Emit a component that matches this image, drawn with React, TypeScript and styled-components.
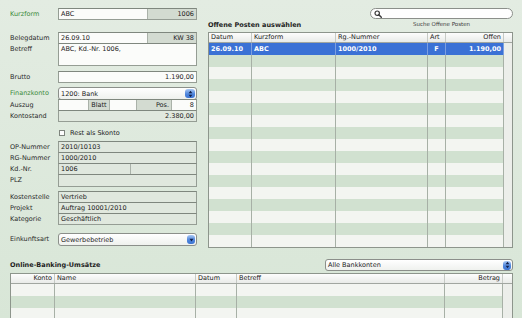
import React from 'react'
import styled, { createGlobalStyle } from 'styled-components'

const GlobalStyle = createGlobalStyle`
  html, body { margin: 0; padding: 0; }
  body {
    font-family: 'DejaVu Sans', 'Liberation Sans', sans-serif;
    font-size: 6.5px;
    color: #222;
  }
`

type Tone = 'white' | 'gray' | 'ro'
type Align = 'left' | 'center' | 'right'

const tones: Record<Tone, string> = {
  white: '#fbfcfa',
  gray: '#d3dbd1',
  ro: '#e0e8de',
}

const justify: Record<Align, string> = {
  left: 'flex-start',
  center: 'center',
  right: 'flex-end',
}

const Window = styled.div`
  width: 522px;
  height: 318px;
  overflow: hidden;
  background: linear-gradient(#e3ece2, #d8e6d7);
  display: flex;
  flex-direction: column;
`

const Top = styled.div`
  display: flex;
  align-items: flex-start;
`

const Form = styled.div`
  width: 187px;
  padding: 8px 0 0 10px;
  display: flex;
  flex-direction: column;
`

const Row = styled.div<{ $mt?: number; $h: number }>`
  display: flex;
  height: ${p => p.$h}px;
  margin-top: ${p => p.$mt ?? 0}px;
`

const Label = styled.div<{ $accent?: boolean }>`
  flex: 0 0 48px;
  line-height: 12px;
  color: ${p => (p.$accent ? '#3b8a3a' : '#2a2a2a')};
  white-space: nowrap;
`

const Field = styled.div<{ $tone?: Tone }>`
  flex: 1;
  display: flex;
  box-sizing: border-box;
  border: 1px solid #959d94;
  border-top-color: #7f877e;
  background: ${p => tones[p.$tone ?? 'white']};
`

const Seg = styled.div<{ $w?: number; $tone?: Tone; $align?: Align; $top?: boolean }>`
  flex: ${p => (p.$w ? `0 0 ${p.$w}px` : '1')};
  display: flex;
  align-items: ${p => (p.$top ? 'flex-start' : 'center')};
  justify-content: ${p => justify[p.$align ?? 'left']};
  padding: ${p => (p.$top ? '1px 2px 0' : '0 2px')};
  box-sizing: border-box;
  background: ${p => (p.$tone ? tones[p.$tone] : 'transparent')};
  white-space: nowrap;
  overflow: hidden;

  & + & {
    border-left: 1px solid #aab2a9;
  }
`

const Select = styled.div`
  flex: 1;
  display: flex;
  align-items: center;
  justify-content: space-between;
  box-sizing: border-box;
  border: 1px solid #8b8f8a;
  border-radius: 3px;
  padding: 0 1px 0 2px;
  background: linear-gradient(#ffffff, #eff1ee);
  white-space: nowrap;
`

const Stepper = styled.div<{ $w: number }>`
  flex: 0 0 ${p => p.$w}px;
  height: 9px;
  border-radius: 3px;
  background: linear-gradient(#a9c8f3, #4f86dd 55%, #3d75d2);
  display: flex;
  align-items: center;
  justify-content: center;
`

const CheckRow = styled.label`
  display: flex;
  align-items: center;
  gap: 5px;
  padding-left: 49px;
  line-height: 10px;
`

const Box = styled.span`
  width: 6px;
  height: 6px;
  box-sizing: border-box;
  border: 1px solid #7e847d;
  background: #fdfdfd;
`

const Right = styled.div`
  margin-left: 11px;
  width: 305px;
  padding-top: 8px;
  display: flex;
  flex-direction: column;
`

const PanelHead = styled.div`
  height: 24px;
  display: flex;
  justify-content: space-between;
`

const Title = styled.div<{ $centered?: boolean }>`
  align-self: ${p => (p.$centered ? 'center' : 'flex-end')};
  margin-bottom: ${p => (p.$centered ? 0 : 2)}px;
  line-height: 10px;
  font-weight: bold;
  color: #1e1e1e;
`

const SearchGroup = styled.div`
  width: 143px;
  display: flex;
  flex-direction: column;
  align-items: center;
`

const SearchField = styled.div`
  align-self: stretch;
  height: 11px;
  box-sizing: border-box;
  border: 1px solid #8b8f8a;
  border-radius: 6px;
  background: #fefefe;
  display: flex;
  align-items: center;
  padding-left: 3px;
`

const Caption = styled.div`
  margin-top: 1px;
  font-size: 5.5px;
  line-height: 8px;
  color: #3a3a3a;
`

const Frame = styled.div<{ $h?: number }>`
  box-sizing: border-box;
  border: 1px solid #8d958c;
  background: #eceeea;
  ${p => (p.$h ? `height: ${p.$h}px;` : '')}
  overflow: hidden;
`

const HeadRow = styled.div<{ $cols: string }>`
  display: grid;
  grid-template-columns: ${p => p.$cols};
  height: 10px;
  box-sizing: border-box;
  border-bottom: 1px solid #a1a6a0;
  background: linear-gradient(#fdfdfd, #e9ebe8);
`

const HeadCell = styled.div<{ $align?: Align }>`
  border-right: 1px solid #c6cac5;
  padding: 0 2px;
  line-height: 9px;
  text-align: ${p => p.$align ?? 'left'};
  white-space: nowrap;
  overflow: hidden;

  &:last-child {
    border-right: none;
  }
`

const BodyRow = styled.div<{ $cols: string; $odd: boolean; $sel?: boolean }>`
  display: grid;
  grid-template-columns: ${p => p.$cols};
  height: 12px;
  background: ${p => (p.$sel ? '#3b71d5' : p.$odd ? '#d1e1d0' : '#f3f5f1')};
  color: ${p => (p.$sel ? '#fff' : '#222')};
  font-weight: ${p => (p.$sel ? 'bold' : 'normal')};
`

const Cell = styled.div<{ $align?: Align; $sel?: boolean }>`
  border-right: 1px solid ${p => (p.$sel ? '#7c9fe0' : '#a7b0a6')};
  padding: 0 2px;
  line-height: 12px;
  text-align: ${p => p.$align ?? 'left'};
  white-space: nowrap;
  overflow: hidden;
`

const Track = styled.div`
  background: #eceeea;
`

const Bottom = styled.div`
  margin-top: 11px;
  padding: 0 9px 0 10px;
  display: flex;
  flex-direction: column;
`

const BottomHead = styled.div`
  height: 12px;
  display: flex;
  justify-content: space-between;
  align-items: center;
  margin-bottom: 2px;
`

const BottomSelect = styled(Select)`
  flex: 0 0 188px;
  height: 12px;
`

const SearchIcon = () => (
  <svg width="8" height="8" viewBox="0 0 8 8">
    <circle cx="3.2" cy="3.2" r="2.2" fill="none" stroke="#3a3a3a" strokeWidth="1.2" />
    <line x1="4.8" y1="4.8" x2="7.3" y2="7.3" stroke="#3a3a3a" strokeWidth="1.5" strokeLinecap="round" />
  </svg>
)

const Arrows = ({ single }: { single?: boolean }) =>
  single ? (
    <svg width="5" height="4" viewBox="0 0 5 4">
      <path d="M0.5 0.8 L4.5 0.8 L2.5 3.4 Z" fill="#12204a" />
    </svg>
  ) : (
    <svg width="5" height="8" viewBox="0 0 5 8">
      <path d="M0.6 3.2 L4.4 3.2 L2.5 0.8 Z" fill="#12204a" />
      <path d="M0.6 4.8 L4.4 4.8 L2.5 7.2 Z" fill="#12204a" />
    </svg>
  )

const opCols = '43px 84px 92px 18px 58px 1fr'
const bankCols = '44px 141px 41px 208px 58px 1fr'

const openItems = Array.from({ length: 17 }, (_, i) =>
  i === 0 ? ['26.09.10', 'ABC', '1000/2010', 'F', '1.190,00'] : ['', '', '', '', '']
)

const opAlign: Align[] = ['left', 'left', 'left', 'center', 'right']
const bankAlign: Align[] = ['right', 'left', 'left', 'left', 'right']

export default function App() {
  return (
    <>
      <GlobalStyle />
      <Window>
        <Top>
          <Form>
            <Row $h={12}>
              <Label $accent>Kurzform</Label>
              <Field>
                <Seg>ABC</Seg>
                <Seg $w={49} $tone="gray" $align="right">1006</Seg>
              </Field>
            </Row>
            <Row $mt={12} $h={12}>
              <Label>Belegdatum</Label>
              <Field>
                <Seg>26.09.10</Seg>
                <Seg $w={49} $tone="gray" $align="right">KW 38</Seg>
              </Field>
            </Row>
            <Row $mt={-1} $h={23}>
              <Label>Betreff</Label>
              <Field>
                <Seg $top>ABC, Kd.-Nr. 1006,</Seg>
              </Field>
            </Row>
            <Row $mt={5} $h={12}>
              <Label>Brutto</Label>
              <Field>
                <Seg $align="right">1.190,00</Seg>
              </Field>
            </Row>
            <Row $mt={4} $h={13}>
              <Label $accent>Finanzkonto</Label>
              <Select>
                1200: Bank
                <Stepper $w={10}>
                  <Arrows />
                </Stepper>
              </Select>
            </Row>
            <Row $mt={-1} $h={12}>
              <Label>Auszug</Label>
              <Field>
                <Seg $w={29} />
                <Seg $w={21} $tone="gray" $align="center">Blatt</Seg>
                <Seg $w={27} />
                <Seg $w={35} $tone="gray" $align="right">Pos.</Seg>
                <Seg $align="right">8</Seg>
              </Field>
            </Row>
            <Row $mt={-1} $h={12}>
              <Label>Kontostand</Label>
              <Field $tone="ro">
                <Seg $align="right">2.380,00</Seg>
              </Field>
            </Row>
            <Row $mt={6} $h={10}>
              <CheckRow>
                <Box />
                Rest als Skonto
              </CheckRow>
            </Row>
            <Row $mt={3} $h={12}>
              <Label>OP-Nummer</Label>
              <Field $tone="ro">
                <Seg>2010/10103</Seg>
              </Field>
            </Row>
            <Row $mt={-1} $h={12}>
              <Label>RG-Nummer</Label>
              <Field $tone="ro">
                <Seg>1000/2010</Seg>
              </Field>
            </Row>
            <Row $mt={-1} $h={12}>
              <Label>Kd.-Nr.</Label>
              <Field $tone="ro">
                <Seg $w={71}>1006</Seg>
                <Seg />
              </Field>
            </Row>
            <Row $mt={-1} $h={13}>
              <Label>PLZ</Label>
              <Field $tone="ro" />
            </Row>
            <Row $mt={4} $h={12}>
              <Label>Kostenstelle</Label>
              <Field $tone="ro">
                <Seg>Vertrieb</Seg>
              </Field>
            </Row>
            <Row $mt={-1} $h={12}>
              <Label>Projekt</Label>
              <Field $tone="ro">
                <Seg>Auftrag 10001/2010</Seg>
              </Field>
            </Row>
            <Row $mt={-1} $h={12}>
              <Label>Kategorie</Label>
              <Field $tone="ro">
                <Seg>Geschäftlich</Seg>
              </Field>
            </Row>
            <Row $mt={8} $h={13}>
              <Label>Einkunftsart</Label>
              <Select>
                Gewerbebetrieb
                <Stepper $w={8}>
                  <Arrows single />
                </Stepper>
              </Select>
            </Row>
          </Form>

          <Right>
            <PanelHead>
              <Title>Offene Posten auswählen</Title>
              <SearchGroup>
                <SearchField>
                  <SearchIcon />
                </SearchField>
                <Caption>Suche Offene Posten</Caption>
              </SearchGroup>
            </PanelHead>
            <Frame $h={216}>
              <HeadRow $cols={opCols}>
                <HeadCell>Datum</HeadCell>
                <HeadCell>Kurzform</HeadCell>
                <HeadCell>Rg.-Nummer</HeadCell>
                <HeadCell>Art</HeadCell>
                <HeadCell $align="right">Offen</HeadCell>
                <HeadCell />
              </HeadRow>
              {openItems.map((r, i) => (
                <BodyRow key={i} $cols={opCols} $odd={i % 2 === 1} $sel={i === 0}>
                  {r.map((c, j) => (
                    <Cell key={j} $align={opAlign[j]} $sel={i === 0}>
                      {c}
                    </Cell>
                  ))}
                  <Track />
                </BodyRow>
              ))}
            </Frame>
          </Right>
        </Top>

        <Bottom>
          <BottomHead>
            <Title $centered>Online-Banking-Umsätze</Title>
            <BottomSelect>
              Alle Bankkonten
              <Stepper $w={8}>
                <Arrows />
              </Stepper>
            </BottomSelect>
          </BottomHead>
          <Frame>
            <HeadRow $cols={bankCols}>
              <HeadCell $align="right">Konto</HeadCell>
              <HeadCell>Name</HeadCell>
              <HeadCell>Datum</HeadCell>
              <HeadCell>Betreff</HeadCell>
              <HeadCell $align="right">Betrag</HeadCell>
              <HeadCell />
            </HeadRow>
            {[0, 1, 2, 3].map(i => (
              <BodyRow key={i} $cols={bankCols} $odd={i % 2 === 1}>
                {bankAlign.map((a, j) => (
                  <Cell key={j} $align={a} />
                ))}
                <Track />
              </BodyRow>
            ))}
          </Frame>
        </Bottom>
      </Window>
    </>
  )
}
